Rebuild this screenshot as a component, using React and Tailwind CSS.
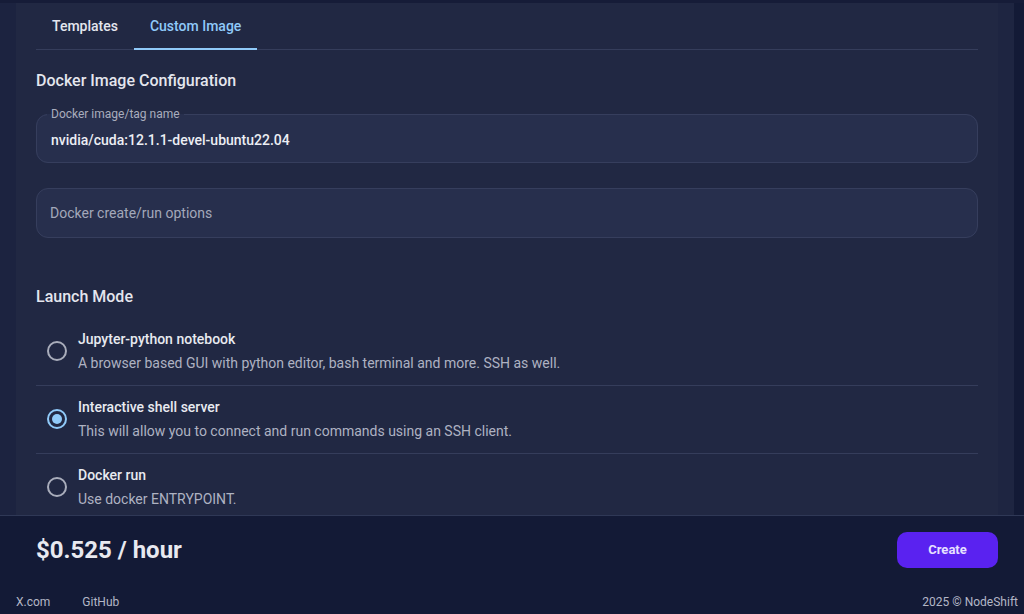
import React from 'react'

const modes = [
  {
    title: 'Jupyter-python notebook',
    desc: 'A browser based GUI with python editor, bash terminal and more. SSH as well.',
    selected: false,
  },
  {
    title: 'Interactive shell server',
    desc: 'This will allow you to connect and run commands using an SSH client.',
    selected: true,
  },
  {
    title: 'Docker run',
    desc: 'Use docker ENTRYPOINT.',
    selected: false,
  },
]

function RadioIcon({ selected }) {
  const color = selected ? '#90caf9' : '#a9adbb'
  return (
    <svg width="24" height="24" viewBox="0 0 24 24" className="shrink-0">
      <circle cx="12" cy="12" r="9" fill="none" stroke={color} strokeWidth="2" />
      {selected && <circle cx="12" cy="12" r="5" fill={color} />}
    </svg>
  )
}

export default function App() {
  return (
    <div
      className="w-[1024px] h-[614px] flex flex-col bg-[#131a36] overflow-hidden"
      style={{ fontFamily: 'Roboto, "Liberation Sans", sans-serif' }}
    >
      {/* scrolling area */}
      <div className="h-[515px] flex flex-col overflow-hidden">
        <div className="h-[3px] bg-[#161c38]" />
        <div className="flex-1 flex min-h-0">
          <div className="w-4 bg-[#1c2340]" />
          <div className="flex-1 bg-[#212843] px-5 overflow-hidden">
            {/* tabs */}
            <div className="flex h-[47px] border-b border-[#353d5b]">
              <div className="relative px-4 flex items-center text-sm font-medium text-[#e4e6ee]">
                Templates
              </div>
              <div className="relative px-4 flex items-center text-sm font-medium text-[#90caf9]">
                Custom Image
                <div className="absolute left-0 right-0 -bottom-px h-[2px] bg-[#90caf9]" />
              </div>
            </div>

            <h2 className="mt-[19px] text-base leading-6 font-medium text-[#e4e6ee]">
              Docker Image Configuration
            </h2>

            <fieldset className="mt-[14px] border border-[#363e5d] rounded-xl bg-[#272f4d] px-[10px]">
              <legend className="px-1 text-xs leading-[14px] text-[#a9adbd]">Docker image/tag name</legend>
              <div className="pl-1 pt-[9px] pb-[12px] text-sm leading-5 font-medium text-[#eceef4]">
                nvidia/cuda:12.1.1-devel-ubuntu22.04
              </div>
            </fieldset>

            <div className="mt-[25px] h-[50px] flex items-center px-[13px] border border-[#363e5d] rounded-xl bg-[#272f4d] text-sm text-[#a3a8ba]">
              Docker create/run options
            </div>

            <h2 className="mt-[47px] text-base leading-6 font-medium text-[#e4e6ee]">Launch Mode</h2>

            <div className="mt-[9px]">
              {modes.map((m, i) => (
                <div
                  key={m.title}
                  className={`flex items-center pt-2.5 pb-[11px] ${i < modes.length - 1 ? 'border-b border-[#353d5b]' : ''}`}
                >
                  <div className="ml-[9px] mr-[9px]">
                    <RadioIcon selected={m.selected} />
                  </div>
                  <div className="flex flex-col gap-0.5">
                    <div className="text-sm leading-[22px] font-medium text-[#e8eaf0]">{m.title}</div>
                    <div className="text-sm leading-[22px] text-[#aeb2c2]">{m.desc}</div>
                  </div>
                </div>
              ))}
            </div>
          </div>
          <div className="w-4 bg-[#1e2541]" />
          <div className="w-[10px] bg-[#131a36]" />
        </div>
      </div>

      {/* footer */}
      <div className="flex-1 border-t border-[#2f3856] flex flex-col">
        <div className="pt-4 pl-9 pr-[26px] flex items-center justify-between h-[52px]">
          <div className="text-2xl font-bold text-[#e8e9f0]">$0.525 / hour</div>
          <button className="w-[101px] h-9 rounded-[10px] bg-[#5a22f0] text-[13px] font-bold text-[#e6e0ff]">
            Create
          </button>
        </div>
        <div className="mt-[26px] pl-4 pr-[6px] flex items-center justify-between text-xs leading-4 text-[#b3b7c7]">
          <div className="flex gap-8">
            <span>X.com</span>
            <span>GitHub</span>
          </div>
          <span>2025 © NodeShift</span>
        </div>
      </div>
    </div>
  )
}
